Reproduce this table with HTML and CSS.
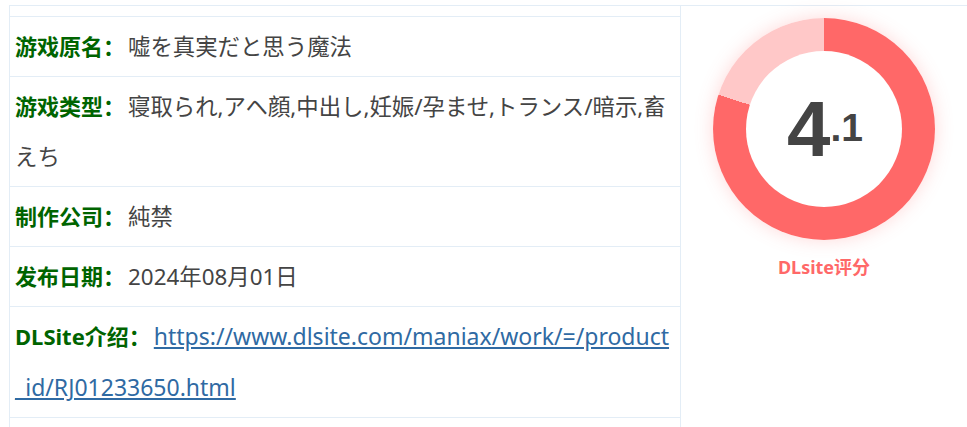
FILE: index.html
```html
<!DOCTYPE html>
<html lang="zh-CN">
<head>
<meta charset="utf-8">
<title>游戏信息</title>
<link rel="stylesheet" href="styles.css">
</head>
<body>
<div class="info">
  <div class="info-main">
    <div class="row"><span class="label">游戏原名：</span><span class="value">嘘を真実だと思う魔法</span></div>
    <div class="row"><span class="label">游戏类型：</span><span class="value">寝取られ,アヘ顔,中出し,妊娠/孕ませ,トランス/暗示,畜えち</span></div>
    <div class="row"><span class="label">制作公司：</span><span class="value">純禁</span></div>
    <div class="row"><span class="label">发布日期：</span><span class="value">2024年08月01日</span></div>
    <div class="row"><span class="label">DLSite介绍：</span><a class="link" href="#">https://www.dlsite.com/maniax/work/=/product_id/RJ01233650.html</a></div>
  </div>
  <div class="info-score">
    <div class="donut">
      <div class="donut-hole"><span class="score-int">4</span><span class="score-dec">.1</span></div>
    </div>
    <div class="score-label">DLsite评分</div>
  </div>
</div>
</body>
</html>
```
FILE: styles.css
```css
html, body {
  margin: 0;
  padding: 0;
  background: #fff;
}
body {
  font-family: "Noto Sans", "Noto Sans CJK SC", sans-serif;
}
.info {
  margin: 5px 0 0 9px;
  display: flex;
  border-top: 1px solid #e3edf6;
  border-left: 1px solid #e3edf6;
  height: 430px;
}
.info-main {
  width: 670px;
  padding-top: 10px;
}
.row {
  border-top: 1px solid #e3edf6;
  padding: 4px 5px 4px 5px;
  line-height: 50px;
  font-size: 22.4px;
  color: #444;
  word-break: break-all;
}
.row:last-child {
  border-bottom: 1px solid #e3edf6;
}
.label {
  color: #006400;
  font-weight: bold;
  font-size: 22px;
  margin-right: 3px;
}
.value {
  font-size: 22.4px;
}
.link {
  color: #2f6aa3;
  text-decoration: underline;
  font-size: 23px;
}
.info-score {
  flex: 1;
  border-left: 1px solid #e3edf6;
  display: flex;
  flex-direction: column;
  align-items: center;
  padding-top: 12px;
}
.donut {
  width: 222px;
  height: 222px;
  border-radius: 50%;
  background: conic-gradient(#ff6868 0 80%, #ffc8c8 80% 100%);
  display: flex;
  align-items: center;
  justify-content: center;
  box-shadow: 0 0 18px rgba(255, 104, 104, 0.25);
}
.donut-hole {
  width: 156px;
  height: 156px;
  border-radius: 50%;
  background: #fff;
  display: flex;
  align-items: baseline;
  justify-content: center;
  color: #444;
  font-family: "Liberation Sans", Arial, sans-serif;
  font-weight: bold;
  line-height: 156px;
}
.score-int {
  font-size: 78px;
  margin-left: 2px;
}
.score-dec {
  font-size: 39px;
  position: relative;
  top: -15px;
}
.score-label {
  margin-top: 13px;
  color: #ff6868;
  font-weight: bold;
  font-size: 18px;
  font-family: "Noto Sans", "Noto Sans CJK SC", sans-serif;
}
```
